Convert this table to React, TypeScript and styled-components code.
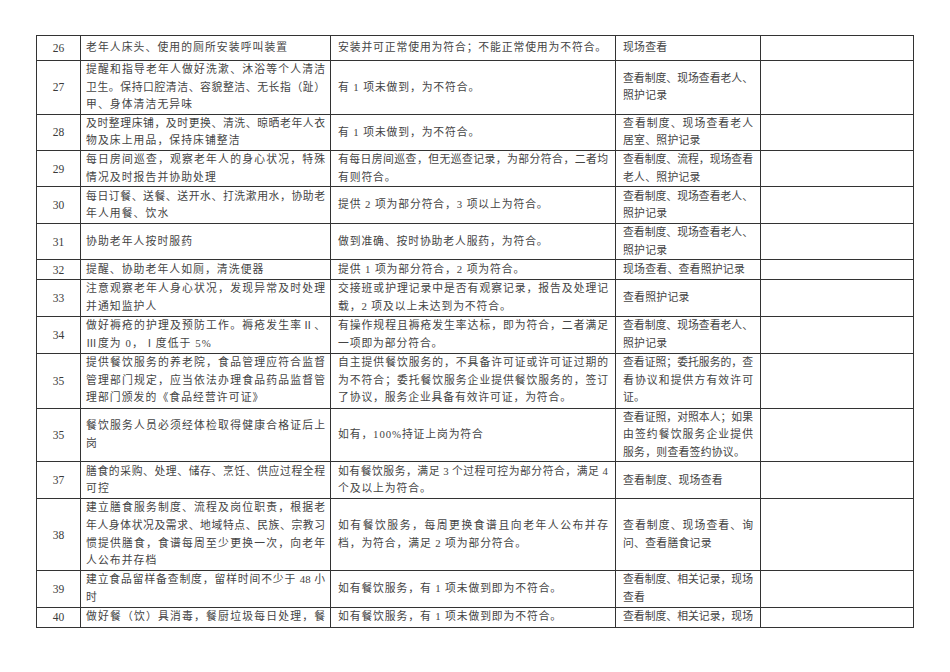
import React from "react";
import styled, { createGlobalStyle } from "styled-components";

const Global = createGlobalStyle`
  html, body { margin: 0; padding: 0; background: #fff; }
  body { font-family: "Liberation Serif", "Noto Sans CJK SC", serif; color: #333; }
`;

const Page = styled.div`
  padding: 35px 0 0 36px;
`;

const Table = styled.table`
  border-collapse: collapse;
  table-layout: fixed;
  width: 877px;
  border: 1px solid #333;
`;

const Col = styled.col<{ $w: number }>`
  width: ${(p) => p.$w}px;
`;

const Row = styled.tr<{ $h: number }>`
  height: ${(p) => p.$h}px;
`;

const NumCell = styled.td`
  border: 1px solid #333;
  text-align: center;
  vertical-align: middle;
  font-family: "Liberation Serif", serif;
  font-size: 11.5px;
  padding: 0;
  color: #3a3a3a;
`;

const TextCell = styled.td<{ $pad: number; $ls: number }>`
  border: 1px solid #333;
  vertical-align: middle;
  padding: 0 ${(p) => p.$pad}px;
  font-size: 10.8px;
  line-height: 17.6px;
  letter-spacing: ${(p) => p.$ls}px;
  color: #444;
  overflow: hidden;
`;

const EmptyCell = styled.td`
  border: 1px solid #333;
  padding: 0;
`;

const Line = styled.div<{ $full: boolean }>`
  display: block;
  text-align: ${(p) => (p.$full ? "justify" : "left")};
  text-align-last: ${(p) => (p.$full ? "justify" : "left")};
  ${(p) => (p.$full ? "letter-spacing: 0;" : "white-space: nowrap;")}
`;

type Cell = { t: string[]; j?: boolean };
type RowData = { n: string; h: number; item: Cell; crit: Cell; method: Cell };

const rows: RowData[] = [
  {
    n: "26", h: 25,
    item: { t: ["老年人床头、使用的厕所安装呼叫装置"] },
    crit: { t: ["安装并可正常使用为符合；不能正常使用为不符合。"] },
    method: { t: ["现场查看"] },
  },
  {
    n: "27", h: 53,
    item: { t: ["提醒和指导老年人做好洗漱、沐浴等个人清洁", "卫生。保持口腔清洁、容貌整洁、无长指（趾）", "甲、身体清洁无异味"] },
    crit: { t: ["有 1 项未做到，为不符合。"] },
    method: { t: ["查看制度、现场查看老人、", "照护记录"] },
  },
  {
    n: "28", h: 35,
    item: { t: ["及时整理床铺，及时更换、清洗、晾晒老年人衣", "物及床上用品，保持床铺整洁"] },
    crit: { t: ["有 1 项未做到，为不符合。"] },
    method: { t: ["查看制度、现场查看老人", "居室、照护记录"] },
  },
  {
    n: "29", h: 36,
    item: { t: ["每日房间巡查，观察老年人的身心状况，特殊", "情况及时报告并协助处理"] },
    crit: { t: ["有每日房间巡查，但无巡查记录，为部分符合，二者均", "有则符合。"] },
    method: { t: ["查看制度、流程，现场查看", "老人、照护记录"] },
  },
  {
    n: "30", h: 37,
    item: { t: ["每日订餐、送餐、送开水、打洗漱用水，协助老", "年人用餐、饮水"] },
    crit: { t: ["提供 2 项为部分符合，3 项以上为符合。"] },
    method: { t: ["查看制度、现场查看老人、", "照护记录"] },
  },
  {
    n: "31", h: 36,
    item: { t: ["协助老年人按时服药"] },
    crit: { t: ["做到准确、按时协助老人服药，为符合。"] },
    method: { t: ["查看制度、现场查看老人、", "照护记录"] },
  },
  {
    n: "32", h: 20,
    item: { t: ["提醒、协助老年人如厕，清洗便器"] },
    crit: { t: ["提供 1 项为部分符合，2 项为符合。"] },
    method: { t: ["现场查看、查看照护记录"] },
  },
  {
    n: "33", h: 36,
    item: { t: ["注意观察老年人身心状况，发现异常及时处理", "并通知监护人"] },
    crit: { t: ["交接班或护理记录中是否有观察记录，报告及处理记", "载，2 项及以上未达到为不符合。"] },
    method: { t: ["查看照护记录"] },
  },
  {
    n: "34", h: 37,
    item: { t: ["做好褥疮的护理及预防工作。褥疮发生率Ⅱ、", "Ⅲ度为 0，Ⅰ度低于 5%"] },
    crit: { t: ["有操作规程且褥疮发生率达标，即为符合，二者满足", "一项即为部分符合。"] },
    method: { t: ["查看制度、现场查看老人、", "照护记录"] },
  },
  {
    n: "35", h: 55,
    item: { t: ["提供餐饮服务的养老院，食品管理应符合监督", "管理部门规定，应当依法办理食品药品监督管", "理部门颁发的《食品经营许可证》"] },
    crit: { t: ["自主提供餐饮服务的，不具备许可证或许可证过期的", "为不符合；委托餐饮服务企业提供餐饮服务的，签订", "了协议，服务企业具备有效许可证，为符合。"] },
    method: { t: ["查看证照；委托服务的，查", "看协议和提供方有效许可", "证。"] },
  },
  {
    n: "35", h: 50,
    item: { t: ["餐饮服务人员必须经体检取得健康合格证后上", "岗"] },
    crit: { t: ["如有，100%持证上岗为符合"] },
    method: { t: ["查看证照，对照本人；如果", "由签约餐饮服务企业提供", "服务，则查看签约协议。"] },
  },
  {
    n: "37", h: 37,
    item: { t: ["膳食的采购、处理、储存、烹饪、供应过程全程", "可控"] },
    crit: { t: ["如有餐饮服务，满足 3 个过程可控为部分符合，满足 4", "个及以上为符合。"] },
    method: { t: ["查看制度、现场查看"] },
  },
  {
    n: "38", h: 71,
    item: { t: ["建立膳食服务制度、流程及岗位职责，根据老", "年人身体状况及需求、地域特点、民族、宗教习", "惯提供膳食，食谱每周至少更换一次，向老年", "人公布并存档"] },
    crit: { t: ["如有餐饮服务，每周更换食谱且向老年人公布并存", "档，为符合，满足 2 项为部分符合。"] },
    method: { t: ["查看制度、现场查看、询", "问、查看膳食记录"] },
  },
  {
    n: "39", h: 37,
    item: { t: ["建立食品留样备查制度，留样时间不少于 48 小", "时"] },
    crit: { t: ["如有餐饮服务，有 1 项未做到即为不符合。"] },
    method: { t: ["查看制度、相关记录，现场", "查看"] },
  },
  {
    n: "40", h: 20,
    item: { t: ["做好餐（饮）具消毒，餐厨垃圾每日处理，餐"], j: true },
    crit: { t: ["如有餐饮服务，有 1 项未做到即为不符合。"] },
    method: { t: ["查看制度、相关记录，现场"], j: true },
  },
];

const widths = [44, 250, 285, 145, 153];

const Lines: React.FC<{ c: Cell }> = ({ c }) => (
  <>
    {c.t.map((s, i) => (
      <Line key={i} $full={i < c.t.length - 1 || !!c.j}>
        {s}
      </Line>
    ))}
  </>
);

export default function App() {
  return (
    <>
      <Global />
      <Page>
        <Table>
          <colgroup>
            {widths.map((w, i) => (
              <Col key={i} $w={w} />
            ))}
          </colgroup>
          <tbody>
            {rows.map((r, i) => (
              <Row key={i} $h={r.h}>
                <NumCell>{r.n}</NumCell>
                <TextCell $pad={5} $ls={1.1}>
                  <Lines c={r.item} />
                </TextCell>
                <TextCell $pad={7} $ls={0.9}>
                  <Lines c={r.crit} />
                </TextCell>
                <TextCell $pad={7} $ls={0.3}>
                  <Lines c={r.method} />
                </TextCell>
                <EmptyCell />
              </Row>
            ))}
          </tbody>
        </Table>
      </Page>
    </>
  );
}
